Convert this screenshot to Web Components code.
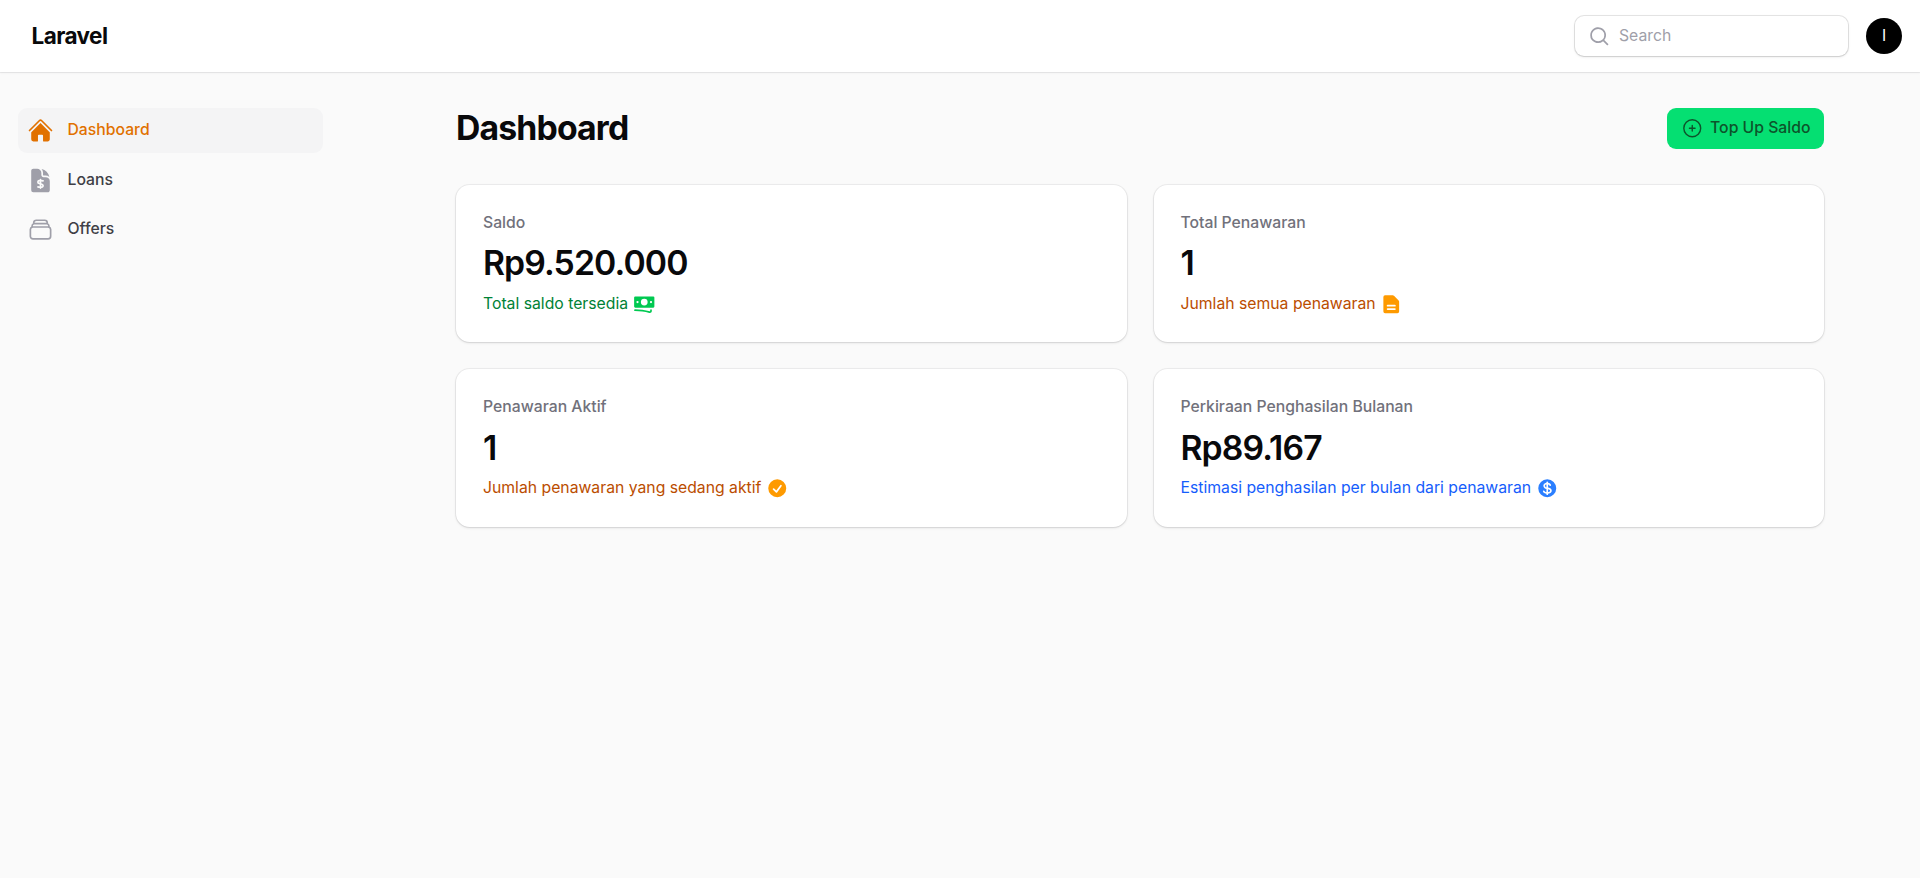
<!DOCTYPE html>
<html lang="id">
<head>
<meta charset="utf-8">
<title>Dashboard - Laravel</title>
<style>
html{font-size:18px}
body{margin:0;background:#fafafa;color:#09090b;font-family:Inter,"Liberation Sans",sans-serif;line-height:1.5;min-height:100vh}
</style>
</head>
<body>
<app-shell>
  <app-topbar slot="topbar" brand="Laravel">
    <search-field>Search</search-field>
    <user-avatar>I</user-avatar>
  </app-topbar>
  <nav-item slot="nav" icon="home" active>Dashboard</nav-item>
  <nav-item slot="nav" icon="loan">Loans</nav-item>
  <nav-item slot="nav" icon="stack">Offers</nav-item>
  <page-header heading="Dashboard"><action-button icon="plus">Top Up Saldo</action-button></page-header>
  <stats-grid>
    <stat-card label="Saldo" value="Rp9.520.000" color="green" icon="cash">Total saldo tersedia</stat-card>
    <stat-card label="Total Penawaran" value="1" color="amber" icon="doc">Jumlah semua penawaran</stat-card>
    <stat-card label="Penawaran Aktif" value="1" color="amber" icon="check">Jumlah penawaran yang sedang aktif</stat-card>
    <stat-card label="Perkiraan Penghasilan Bulanan" value="Rp89.167" color="blue" icon="dollar">Estimasi penghasilan per bulan dari penawaran</stat-card>
  </stats-grid>
</app-shell>
<script>
const solid = (size, ...paths) => `<svg viewBox="0 0 ${size} ${size}" fill="currentColor" aria-hidden="true">${paths.map(d => `<path fill-rule="evenodd" clip-rule="evenodd" d="${d}"/>`).join('')}</svg>`;
const outline = d => `<svg viewBox="0 0 24 24" fill="none" stroke="currentColor" stroke-width="1.5" stroke-linecap="round" stroke-linejoin="round" aria-hidden="true"><path d="${d}"/></svg>`;
const ICONS = {
  home: solid(24, 'M11.47 3.841a.75.75 0 0 1 1.06 0l8.69 8.69a.75.75 0 1 0 1.06-1.061l-8.689-8.69a2.25 2.25 0 0 0-3.182 0l-8.69 8.69a.75.75 0 1 0 1.061 1.06l8.69-8.689Z', 'm12 5.432 8.159 8.159c.03.03.06.058.091.086v6.198c0 1.035-.84 1.875-1.875 1.875H15a.75.75 0 0 1-.75-.75v-4.5a.75.75 0 0 0-.75-.75h-3a.75.75 0 0 0-.75.75V21a.75.75 0 0 1-.75.75H5.625a1.875 1.875 0 0 1-1.875-1.875v-6.198a2.29 2.29 0 0 0 .091-.086L12 5.432Z'),
  loan: solid(24, 'M3.75 3.375c0-1.036.84-1.875 1.875-1.875H9a3.75 3.75 0 0 1 3.75 3.75v1.875c0 1.036.84 1.875 1.875 1.875H16.5a3.75 3.75 0 0 1 3.75 3.75v7.875c0 1.035-.84 1.875-1.875 1.875H5.625a1.875 1.875 0 0 1-1.875-1.875V3.375Zm10.5 1.875a5.23 5.23 0 0 0-1.279-3.434 9.768 9.768 0 0 1 6.963 6.963A5.23 5.23 0 0 0 16.5 7.5h-1.875a.375.375 0 0 1-.375-.375V5.25ZM12 10.5a.75.75 0 0 1 .75.75v.028a9.727 9.727 0 0 1 1.687.28.75.75 0 1 1-.374 1.452 8.207 8.207 0 0 0-1.313-.226v1.68l.969.332c.67.23 1.281.85 1.281 1.704 0 .158-.007.314-.02.468-.083.931-.83 1.582-1.669 1.695a9.776 9.776 0 0 1-.561.059v.028a.75.75 0 0 1-1.5 0v-.029a9.724 9.724 0 0 1-1.687-.278.75.75 0 0 1 .374-1.453c.425.11.864.186 1.313.226v-1.68l-.968-.332C9.612 14.974 9 14.354 9 13.5c0-.158.007-.314.02-.468.083-.931.831-1.582 1.67-1.694.185-.025.372-.045.56-.06v-.028a.75.75 0 0 1 .75-.75Zm-1.11 2.324c.119-.016.239-.03.36-.04v1.166l-.482-.165c-.208-.072-.268-.211-.268-.285 0-.113.005-.225.015-.336.013-.146.14-.309.374-.34Zm1.86 4.392V16.05l.482.165c.208.072.268.211.268.285 0 .113-.005.225-.015.336-.012.146-.14.309-.374.34-.12.016-.24.03-.361.04Z'),
  stack: outline('M6 6.878V6a2.25 2.25 0 0 1 2.25-2.25h7.5A2.25 2.25 0 0 1 18 6v.878m-12 0c.235-.083.487-.128.75-.128h10.5c.263 0 .515.045.75.128m-12 0A2.25 2.25 0 0 0 4.5 9v.878m13.5-3A2.25 2.25 0 0 1 19.5 9v.878m0 0a2.246 2.246 0 0 0-.75-.128H5.25c-.263 0-.515.045-.75.128m15 0A2.25 2.25 0 0 1 21 12v6a2.25 2.25 0 0 1-2.25 2.25H5.25A2.25 2.25 0 0 1 3 18v-6c0-.98.626-1.813 1.5-2.122'),
  plus: outline('M12 9v6m3-3H9m12 0a9 9 0 1 1-18 0 9 9 0 0 1 18 0Z'),
  search: solid(20, 'M9 3.5a5.5 5.5 0 1 0 0 11 5.5 5.5 0 0 0 0-11ZM2 9a7 7 0 1 1 12.452 4.391l3.328 3.329a.75.75 0 1 1-1.06 1.06l-3.329-3.328A7 7 0 0 1 2 9Z'),
  cash: solid(20, 'M1 4a1 1 0 0 1 1-1h16a1 1 0 0 1 1 1v8a1 1 0 0 1-1 1H2a1 1 0 0 1-1-1V4Zm12 4a3 3 0 1 1-6 0 3 3 0 0 1 6 0ZM4 9a1 1 0 1 0 0-2 1 1 0 0 0 0 2Zm13-1a1 1 0 1 1-2 0 1 1 0 0 1 2 0ZM1.75 14.5a.75.75 0 0 0 0 1.5c4.417 0 8.693.603 12.749 1.73 1.111.309 2.251-.512 2.251-1.696v-.784a.75.75 0 0 0-1.5 0v.784a.272.272 0 0 1-.35.25A49.043 49.043 0 0 0 1.75 14.5Z'),
  doc: solid(20, 'M4.5 2A1.5 1.5 0 0 0 3 3.5v13A1.5 1.5 0 0 0 4.5 18h11a1.5 1.5 0 0 0 1.5-1.5V7.621a1.5 1.5 0 0 0-.44-1.06l-4.12-4.122A1.5 1.5 0 0 0 11.378 2H4.5Zm2.25 8.5a.75.75 0 0 0 0 1.5h6.5a.75.75 0 0 0 0-1.5h-6.5Zm0 3a.75.75 0 0 0 0 1.5h6.5a.75.75 0 0 0 0-1.5h-6.5Z'),
  check: solid(20, 'M10 18a8 8 0 1 0 0-16 8 8 0 0 0 0 16Zm3.857-9.809a.75.75 0 0 0-1.214-.882l-3.483 4.79-1.88-1.88a.75.75 0 1 0-1.06 1.061l2.5 2.5a.75.75 0 0 0 1.137-.089l4-5.5Z'),
  dollar: solid(20, 'M10.75 10.818v2.614A3.13 3.13 0 0 0 11.888 13c.482-.315.612-.648.612-.875 0-.227-.13-.56-.612-.875a3.13 3.13 0 0 0-1.138-.432ZM8.33 8.62c.053.055.115.11.184.164.208.16.46.284.736.363V6.603a2.45 2.45 0 0 0-.35.13c-.14.065-.27.143-.386.233-.377.292-.514.627-.514.909 0 .184.058.39.202.592.037.051.08.102.128.152Z', 'M18 10a8 8 0 1 1-16 0 8 8 0 0 1 16 0Zm-8-6a.75.75 0 0 1 .75.75v.316a3.78 3.78 0 0 1 1.653.713c.426.33.744.74.925 1.2a.75.75 0 0 1-1.395.55 1.35 1.35 0 0 0-.447-.563 2.187 2.187 0 0 0-.736-.363V9.3c.698.093 1.383.32 1.959.696.787.514 1.29 1.27 1.29 2.13 0 .86-.504 1.616-1.29 2.13-.576.377-1.261.603-1.96.696v.299a.75.75 0 1 1-1.5 0v-.3c-.697-.092-1.382-.318-1.958-.695-.482-.315-.857-.717-1.078-1.188a.75.75 0 1 1 1.359-.636c.08.173.245.376.54.569.313.205.706.353 1.138.432v-2.748a3.782 3.782 0 0 1-1.653-.713C6.9 9.433 6.5 8.681 6.5 7.875c0-.805.4-1.558 1.097-2.096a3.78 3.78 0 0 1 1.653-.713V4.75A.75.75 0 0 1 10 4Z')
};

const define = (name, render) => customElements.define(name, class extends HTMLElement {
  connectedCallback() {
    if (this.shadowRoot) return;
    this.attachShadow({ mode: 'open' }).innerHTML = render(this);
  }
});

define('ui-icon', el => `<style>
  :host{display:block;flex:none;width:1.25rem;height:1.25rem}
  svg{display:block;width:100%;height:100%}
</style>${ICONS[el.getAttribute('name')]}`);

define('app-shell', () => `<style>
  :host{display:flex;flex-direction:column;min-height:100vh}
  .body{display:flex;flex:1}
  nav{box-sizing:border-box;width:20rem;flex:none;padding:2rem 37px 2rem 1rem;display:flex;flex-direction:column;gap:.25rem}
  main{flex:1;min-width:0}
  .content{box-sizing:border-box;max-width:80rem;margin:0 auto;padding:2rem;display:flex;flex-direction:column;gap:2rem}
</style>
<slot name="topbar"></slot>
<div class="body"><nav><slot name="nav"></slot></nav><main><div class="content"><slot></slot></div></main></div>`);

define('app-topbar', el => `<style>
  :host{display:flex;align-items:center;gap:1rem;box-sizing:border-box;height:4rem;padding:0 1rem 0 1.75rem;background:#fff;
    box-shadow:0 0 0 1px rgba(9,9,11,.05),0 1px 2px rgba(0,0,0,.06)}
  .brand{margin-right:auto;font-size:1.25rem;line-height:1.75rem;font-weight:700;letter-spacing:-.025em}
</style><div class="brand">${el.getAttribute('brand')}</div><slot></slot>`);

define('search-field', () => `<style>
  :host{display:flex;align-items:center;gap:.5rem;box-sizing:border-box;width:273px;height:2.25rem;padding:1px 12.5px 0;background:#fff;border-radius:.5rem;
    box-shadow:0 0 0 1px rgba(9,9,11,.1),0 1px 3px rgba(0,0,0,.1),0 1px 2px -1px rgba(0,0,0,.1);color:#9f9fa9;font-size:.875rem;line-height:1.25rem}
</style><ui-icon name="search"></ui-icon><span><slot></slot></span>`);

define('user-avatar', () => `<style>
  :host{display:flex;align-items:center;justify-content:center;width:2rem;height:2rem;border-radius:50%;background:#000;color:#fff;font-size:15.5px;line-height:1}
</style><slot></slot>`);

define('nav-item', el => `<style>
  :host{display:flex;align-items:center;gap:.75rem;box-sizing:border-box;height:2.5rem;padding:0 .5rem;border-radius:.5rem;font-size:.875rem;line-height:1.25rem;font-weight:500;color:#3f3f46}
  :host([active]){background:#f4f4f5;color:#e17100}
  ui-icon{width:1.5rem;height:1.5rem;color:#9f9fa9}
  :host([active]) ui-icon{color:inherit}
</style><ui-icon name="${el.getAttribute('icon')}"></ui-icon><span><slot></slot></span>`);

define('page-header', el => `<style>
  :host{display:flex;align-items:center;justify-content:space-between;height:2.25rem}
  h1{margin:0;font-size:1.875rem;line-height:2.25rem;font-weight:700;letter-spacing:-.025em}
</style><h1>${el.getAttribute('heading')}</h1><slot></slot>`);

define('action-button', el => `<style>
  :host{display:block}
  button{display:flex;align-items:center;gap:.375rem;height:2.25rem;padding:0 .75rem;border:0;border-radius:.5rem;background:#05df72;color:#0d542b;font:500 .875rem/1.25rem Inter,"Liberation Sans",sans-serif}
</style><button type="button"><ui-icon name="${el.getAttribute('icon')}"></ui-icon><span><slot></slot></span></button>`);

define('stats-grid', () => `<style>
  :host{display:grid;grid-template-columns:1fr 1fr;gap:1.5rem}
</style><slot></slot>`);

define('stat-card', el => `<style>
  :host{display:flex;flex-direction:column;gap:.5rem;padding:1.5rem;background:#fff;border-radius:.75rem;
    box-shadow:0 0 0 1px rgba(9,9,11,.05),0 1px 3px rgba(0,0,0,.1),0 1px 2px -1px rgba(0,0,0,.1)}
  .label,.note{font-size:.875rem;line-height:1.25rem}
  .label{font-weight:500;color:#71717b}
  .value{font-size:1.875rem;line-height:2.25rem;font-weight:600;letter-spacing:-.0265em}
  .note{display:flex;align-items:center;gap:.25rem;color:var(--text)}
  ui-icon{color:var(--mark)}
  :host([color=green]){--text:#008236;--mark:#00c951}
  :host([color=amber]){--text:#bb4d00;--mark:#fe9a00}
  :host([color=blue]){--text:#155dfc;--mark:#2b7fff}
</style>
<div class="label">${el.getAttribute('label')}</div>
<div class="value">${el.getAttribute('value')}</div>
<div class="note"><span><slot></slot></span><ui-icon name="${el.getAttribute('icon')}"></ui-icon></div>`);
</script>
</body>
</html>
